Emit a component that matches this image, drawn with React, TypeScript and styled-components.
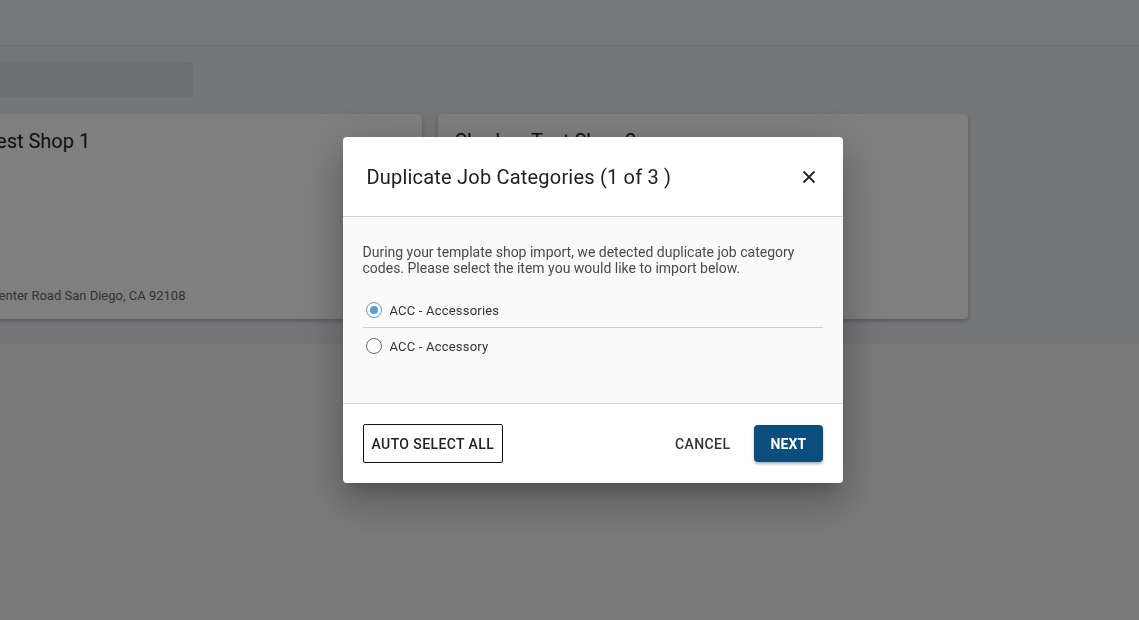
import * as React from "react";
import styled, { createGlobalStyle } from "styled-components";

const GlobalStyle = createGlobalStyle`
  html, body {
    margin: 0;
    padding: 0;
    font-family: Roboto, "Liberation Sans", Arial, sans-serif;
    background: #f5f5f5;
  }
  * {
    box-sizing: border-box;
  }
`;

const Page = styled.div`
  width: 1139px;
  height: 620px;
  overflow: hidden;
  background: #f5f5f5;
`;

const Header = styled.header`
  height: 46px;
  background: #eceef2;
  border-bottom: 1px solid #dcdde0;
`;

const Section = styled.section`
  background: #ebecf0;
  padding: 16px 0 24px;
  border-bottom: 1px solid #e6e6e8;
`;

const Skeleton = styled.div`
  width: 301px;
  height: 35px;
  margin-left: -108px;
  border-radius: 4px;
  background: #dfe0e3;
`;

const CardRow = styled.div`
  display: flex;
  gap: 16px;
  margin-top: 17px;
  margin-left: -108px;
`;

const ShopCard = styled.div`
  width: 530px;
  height: 205px;
  flex-shrink: 0;
  background: #ffffff;
  border-radius: 4px;
  box-shadow: 0 2px 4px rgba(0, 0, 0, 0.25);
  padding: 16px 17px 14px;
  display: flex;
  flex-direction: column;
  justify-content: space-between;
`;

const ShopName = styled.div`
  font-size: 20px;
  color: #1e1e1e;
  line-height: 22px;
`;

const ShopAddress = styled.div`
  font-size: 13px;
  color: #666;
  margin-bottom: 2px;
`;

const Overlay = styled.div`
  position: fixed;
  inset: 0;
  background: rgba(0, 0, 0, 0.5);
  display: flex;
  align-items: center;
  justify-content: center;
  padding-left: 46px;
`;

const Dialog = styled.div`
  width: 500px;
  background: #ffffff;
  border-radius: 4px;
  overflow: hidden;
  box-shadow: 0 11px 15px -7px rgba(0, 0, 0, 0.2),
    0 24px 38px 3px rgba(0, 0, 0, 0.14), 0 9px 46px 8px rgba(0, 0, 0, 0.12);
`;

const DialogHeader = styled.div`
  height: 80px;
  padding: 0 24px;
  display: flex;
  align-items: center;
  justify-content: space-between;
  border-bottom: 1px solid #d5d5d5;
`;

const DialogTitle = styled.h2`
  margin: 0;
  font-size: 20px;
  font-weight: 400;
  color: #212121;
  letter-spacing: 0.2px;
`;

const CloseButton = styled.button`
  border: none;
  background: none;
  padding: 0;
  width: 24px;
  height: 24px;
  display: flex;
  align-items: center;
  justify-content: center;
  cursor: pointer;
  color: #222;
  margin-right: -2px;
`;

const DialogBody = styled.div`
  background: #fafafa;
  padding: 27px 20px 39px;
  border-bottom: 1px solid #d5d5d5;
`;

const Intro = styled.p`
  margin: 0 0 17px;
  font-size: 14px;
  line-height: 16px;
  color: #4a4a4a;
`;

const OptionRow = styled.label<{ $divider?: boolean }>`
  display: flex;
  align-items: center;
  gap: 8px;
  height: ${(p) => (p.$divider ? "35px" : "36px")};
  padding-left: 3px;
  font-size: 13px;
  color: #333;
  letter-spacing: 0.2px;
  cursor: pointer;
  border-bottom: ${(p) => (p.$divider ? "1px solid #cfcfcf" : "none")};
`;

const RadioDot = styled.span<{ $checked?: boolean }>`
  width: 16px;
  height: 16px;
  border-radius: 50%;
  border: 1.5px solid ${(p) => (p.$checked ? "#5b9bd5" : "#6a6a6a")};
  display: flex;
  align-items: center;
  justify-content: center;
  &::after {
    content: "";
    width: 8px;
    height: 8px;
    border-radius: 50%;
    background: ${(p) => (p.$checked ? "#5b9bd5" : "transparent")};
  }
`;

const DialogFooter = styled.div`
  height: 79px;
  padding: 0 20px;
  display: flex;
  align-items: center;
  justify-content: space-between;
`;

const FooterActions = styled.div`
  display: flex;
  align-items: center;
  gap: 16px;
`;

const BaseButton = styled.button`
  font-family: Roboto, "Liberation Sans", Arial, sans-serif;
  font-size: 14px;
  font-weight: 500;
  letter-spacing: 0.4px;
  text-transform: uppercase;
  cursor: pointer;
  border-radius: 2px;
  display: flex;
  align-items: center;
  justify-content: center;
`;

const OutlineButton = styled(BaseButton)`
  height: 39px;
  padding: 0 8px;
  background: #ffffff;
  color: #222;
  border: 1px solid #111;
`;

const TextButton = styled(BaseButton)`
  height: 36px;
  padding: 0 8px;
  background: none;
  border: none;
  color: #333;
`;

const PrimaryButton = styled(BaseButton)`
  height: 37px;
  padding: 0 16px;
  background: #0b4d7c;
  color: #ffffff;
  border: none;
  border-radius: 4px;
  font-weight: 700;
  letter-spacing: 0.2px;
  box-shadow: 0 2px 3px rgba(0, 0, 0, 0.3);
`;

const shops = [
  { name: "Shadow Test Shop 1", address: "12345 Sports Center Road San Diego, CA 92108" },
  { name: "Shadow Test Shop 2", address: "12345 Sports Center Road San Diego, CA 92108" },
];

const options = ["ACC - Accessories", "ACC - Accessory"];

export default function App() {
  const [selected, setSelected] = React.useState(0);

  return (
    <>
      <GlobalStyle />
      <Page>
        <Header />
        <Section>
          <Skeleton />
          <CardRow>
            {shops.map((shop) => (
              <ShopCard key={shop.name}>
                <ShopName>{shop.name}</ShopName>
                <ShopAddress>{shop.address}</ShopAddress>
              </ShopCard>
            ))}
          </CardRow>
        </Section>
      </Page>
      <Overlay>
        <Dialog role="dialog" aria-labelledby="dup-title">
          <DialogHeader>
            <DialogTitle id="dup-title">Duplicate Job Categories (1 of 3 )</DialogTitle>
            <CloseButton aria-label="close">
              <svg width="14" height="14" viewBox="0 0 14 14">
                <path
                  d="M1.5 1.5 L12.5 12.5 M12.5 1.5 L1.5 12.5"
                  stroke="currentColor"
                  strokeWidth="1.8"
                  fill="none"
                />
              </svg>
            </CloseButton>
          </DialogHeader>
          <DialogBody>
            <Intro>
              During your template shop import, we detected duplicate job category
              codes. Please select the item you would like to import below.
            </Intro>
            {options.map((label, i) => (
              <OptionRow
                key={label}
                $divider={i < options.length - 1}
                onClick={() => setSelected(i)}
              >
                <RadioDot $checked={selected === i} />
                {label}
              </OptionRow>
            ))}
          </DialogBody>
          <DialogFooter>
            <OutlineButton>Auto Select All</OutlineButton>
            <FooterActions>
              <TextButton>Cancel</TextButton>
              <PrimaryButton>Next</PrimaryButton>
            </FooterActions>
          </DialogFooter>
        </Dialog>
      </Overlay>
    </>
  );
}
